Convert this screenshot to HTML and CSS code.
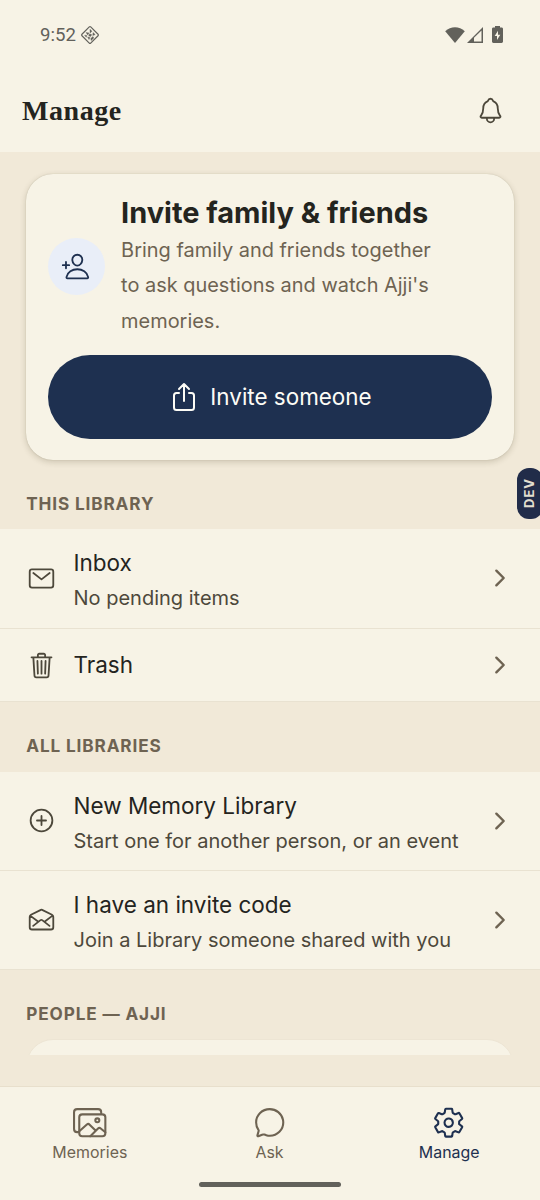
FILE: index.html
```html
<!DOCTYPE html>
<html lang="en">
<head>
<meta charset="utf-8">
<meta name="viewport" content="width=device-width, initial-scale=1">
<title>Manage</title>
<link rel="stylesheet" href="styles.css">
</head>
<body>
<div class="app">
  <div class="status-bar">
    <span class="time">9:52</span>
    <svg class="status-diamond" viewBox="0 0 20 20"><rect x="3.8" y="3.8" width="12.4" height="12.4" rx="1" transform="rotate(45 10 10)" fill="none" stroke="currentColor" stroke-width="1.2"/><path d="M10 4.3l2 2-2 1.6zM6 7.6l3 .3-1.2 2zM13 7.6l2.2 2-2.4 1zM4.6 10.2l2.3.2-.7 1.9zM9.6 8.8l2.2.9-1.3 1.9-1.8-.9zM7.6 11.9l2.4.6-1 2zM12.8 11.5l1 1.5-2.7 2.6-.3-2z" fill="currentColor" stroke="currentColor" stroke-width=".4"/></svg>
    <div class="status-right">
      <svg class="wifi" viewBox="0 0 20 16"><path d="M0.2 4.3C5.8-1 14.2-1 19.8 4.3L10 15.9z" fill="currentColor"/></svg>
      <svg class="signal" viewBox="0 0 16 16"><path d="M0 16L16 0v16z" fill="currentColor"/><path d="M7 14.5V10.8L14.5 3.4v11.1z" class="surface-fill"/></svg>
      <svg class="battery" viewBox="0 0 11 17"><path d="M3 1.5V0h5v1.5h1.6c.8 0 1.4.6 1.4 1.4v12.7c0 .8-.6 1.4-1.4 1.4H1.4C.6 17 0 16.4 0 15.6V2.9c0-.8.6-1.4 1.4-1.4z" fill="currentColor"/><path d="M6 4.7L2.7 10H5v4l3.3-5.3H6z" class="surface-fill"/></svg>
    </div>
  </div>
  <header class="header">
    <h1 class="title">Manage</h1>
    <svg class="icon bell" viewBox="0 0 512 512"><path d="M427.68 351.43C402 320 383.87 304 383.87 217.35 383.87 138 343.35 109.73 310 96c-4.43-1.82-8.6-6-9.95-10.55C294.2 65.54 277.8 48 256 48s-38.21 17.55-44 37.47c-1.35 4.6-5.52 8.71-9.95 10.53-33.39 13.75-73.87 41.92-73.87 121.35C128.13 304 110 320 84.32 351.43 73.68 364.45 83 384 101.61 384h308.88c18.51 0 27.77-19.61 17.19-32.57zM320 384v16a64 64 0 01-128 0v-16"/></svg>
  </header>

  <main class="content">
    <section class="card">
      <div class="card-head">
        <div class="avatar"><svg class="icon" viewBox="0 0 512 512"><path d="M376 144c-3.92 52.87-44 96-88 96s-84.15-43.12-88-96c-4-55 35-96 88-96s92 42 88 96zM288 304c-87 0-175.3 48-191.64 138.6-2 10.92 4.21 21.4 15.65 21.4H464c11.44 0 17.62-10.48 15.65-21.4C463.3 352 375 304 288 304zM88 176v112M144 232H32"/></svg></div>
        <div class="card-text">
          <h2 class="card-title">Invite family &amp; friends</h2>
          <p class="card-body">Bring family and friends together<br>to ask questions and watch Ajji's<br>memories.</p>
        </div>
      </div>
      <button class="button"><svg class="icon share" viewBox="0 0 512 512"><path d="M336 192h40a40 40 0 0140 40v192a40 40 0 01-40 40H136a40 40 0 01-40-40V232a40 40 0 0140-40h40M336 128l-80-80-80 80M256 321V48"/></svg><span>Invite someone</span></button>
    </section>

    <h3 class="section-label">THIS LIBRARY</h3>
    <div class="list">
      <div class="row tall">
        <svg class="icon" viewBox="0 0 512 512"><rect x="48" y="96" width="416" height="320" rx="40"/><path d="M112 160l144 112 144-112"/></svg>
        <div class="row-text"><div class="row-title">Inbox</div><div class="row-sub">No pending items</div></div>
        <svg class="icon chevron" viewBox="0 0 512 512"><path d="M184 112l144 144-144 144"/></svg>
      </div>
      <div class="row single">
        <svg class="icon" viewBox="0 0 512 512"><path d="M112 112l20 320c.95 18.49 14.4 32 32 32h184c17.67 0 30.87-13.51 32-32l20-320M80 112h352M192 112V72a23.93 23.93 0 0124-24h80a23.93 23.93 0 0124 24v40M256 176v224M184 176l8 224M328 176l-8 224"/></svg>
        <div class="row-text"><div class="row-title">Trash</div></div>
        <svg class="icon chevron" viewBox="0 0 512 512"><path d="M184 112l144 144-144 144"/></svg>
      </div>
    </div>

    <h3 class="section-label">ALL LIBRARIES</h3>
    <div class="list">
      <div class="row">
        <svg class="icon" viewBox="0 0 512 512"><circle cx="256" cy="256" r="192"/><path d="M256 176v160M336 256H176"/></svg>
        <div class="row-text"><div class="row-title">New Memory Library</div><div class="row-sub">Start one for another person, or an event</div></div>
        <svg class="icon chevron" viewBox="0 0 512 512"><path d="M184 112l144 144-144 144"/></svg>
      </div>
      <div class="row">
        <svg class="icon" viewBox="0 0 512 512"><path d="M441.6 171.61L266.87 85.37a24.57 24.57 0 00-21.74 0L70.4 171.61A40 40 0 0048 207.39V392c0 22.09 18.14 40 40.52 40h335c22.38 0 40.52-17.91 40.52-40V207.39a40 40 0 00-22.44-35.78zM397.33 368L268.07 267.46a24 24 0 00-29.47 0L109.33 368M309.33 295l136-103M61.33 192l139 105"/></svg>
        <div class="row-text"><div class="row-title">I have an invite code</div><div class="row-sub">Join a Library someone shared with you</div></div>
        <svg class="icon chevron" viewBox="0 0 512 512"><path d="M184 112l144 144-144 144"/></svg>
      </div>
    </div>

    <h3 class="section-label">PEOPLE — AJJI</h3>
    <div class="people-card"></div>
  </main>

  <nav class="tabs">
    <div class="tab">
      <svg class="icon" viewBox="0 0 512 512"><path d="M432 112V96a48.14 48.14 0 00-48-48H64a48.14 48.14 0 00-48 48v256a48.14 48.14 0 0048 48h16"/><rect x="96" y="128" width="400" height="336" rx="46"/><ellipse cx="372.92" cy="219.64" rx="30.77" ry="30.55"/><path d="M342.15 372.17L255 285.78a30.93 30.93 0 00-42.18-1.21L96 387.64M265.23 464l118.59-117.73a31 31 0 0141.46-1.87L496 402.91"/></svg>
      <span>Memories</span>
    </div>
    <div class="tab">
      <svg class="icon" viewBox="0 0 512 512"><path d="M87.49 380c1.19-4.38-1.44-10.47-3.95-14.86a44.86 44.86 0 00-2.54-3.8 199.81 199.81 0 01-33-110C47.65 139.09 140.73 48 255.83 48 356.21 48 440 117.54 459.58 209.85a199 199 0 014.42 41.64c0 112.41-89.49 204.93-204.59 204.93-18.3 0-43-4.6-56.47-8.37s-26.92-8.77-30.39-10.11a31.09 31.09 0 00-11.12-2.07 30.71 30.71 0 00-12.09 2.43l-67.83 24.48a16 16 0 01-4.67 1.22 9.6 9.6 0 01-9.57-9.74 15.85 15.85 0 01.6-3.29z"/></svg>
      <span>Ask</span>
    </div>
    <div class="tab active">
      <svg class="icon" viewBox="0 0 512 512"><path d="M262.29 192.31a64 64 0 1057.4 57.4 64.13 64.13 0 00-57.4-57.4zM416.39 256a154.34 154.34 0 01-1.53 20.79l45.21 35.46a10.81 10.81 0 012.45 13.75l-42.77 74a10.81 10.81 0 01-13.14 4.59l-44.9-18.08a16.11 16.11 0 00-15.17 1.75A164.48 164.48 0 01325 400.8a15.94 15.94 0 00-8.82 12.14l-6.73 47.89a11.08 11.08 0 01-10.68 9.17h-85.54a11.11 11.11 0 01-10.69-8.87l-6.72-47.82a16.07 16.07 0 00-9-12.22 155.3 155.3 0 01-21.46-12.57 16 16 0 00-15.11-1.71l-44.89 18.07a10.81 10.81 0 01-13.14-4.58l-42.77-74a10.8 10.8 0 012.45-13.75l38.21-30a16.05 16.05 0 006-14.08c-.36-4.17-.58-8.33-.58-12.5s.21-8.27.58-12.35a16 16 0 00-6.07-13.94l-38.19-30A10.81 10.81 0 0149.48 186l42.77-74a10.81 10.81 0 0113.14-4.59l44.9 18.08a16.11 16.11 0 0015.17-1.75A164.48 164.48 0 01187 111.2a15.94 15.94 0 008.82-12.14l6.73-47.89A11.08 11.08 0 01213.23 42h85.54a11.11 11.11 0 0110.69 8.87l6.72 47.82a16.07 16.07 0 009 12.22 155.3 155.3 0 0121.46 12.57 16 16 0 0015.11 1.71l44.89-18.07a10.81 10.81 0 0113.14 4.58l42.77 74a10.8 10.8 0 01-2.45 13.75l-38.21 30a16.05 16.05 0 00-6.05 14.08c.33 4.14.55 8.3.55 12.47z"/></svg>
      <span>Manage</span>
    </div>
  </nav>
  <div class="home-bar"></div>
  <div class="dev-badge"><span>DEV</span></div>
</div>
</body>
</html>
```

FILE: styles.css
```css
:root {
  --bg: #f1e9d8;
  --surface: #f7f3e6;
  --line: #e9e2d1;
  --ink: #24241e;
  --soft: #4d483b;
  --muted: #6e6352;
  --navy: #1e3050;
}

* { box-sizing: border-box; margin: 0; }

body { font-family: Inter, "Liberation Sans", sans-serif; color: var(--ink); background: var(--bg); }

.app {
  position: relative;
  width: 540px;
  height: 1200px;
  overflow: hidden;
  display: flex;
  flex-direction: column;
  background: var(--bg);
}

.icon {
  width: 29px;
  height: 29px;
  flex: none;
  display: block;
  fill: none;
  stroke: currentColor;
  stroke-width: 32;
  stroke-linecap: round;
  stroke-linejoin: round;
}

.surface-fill { fill: var(--surface); }

.status-bar {
  height: 69px;
  flex: none;
  display: flex;
  align-items: center;
  padding: 0 37px 0 40px;
  background: var(--surface);
  color: #62615b;
}
.time { font: 18.6px/20px Roboto, sans-serif; }
.status-diamond { width: 20px; height: 20px; margin-left: 4px; }
.status-right { margin-left: auto; display: flex; align-items: center; }
.wifi { width: 20px; height: 16px; }
.signal { width: 16px; height: 16px; margin-left: 2px; }
.battery { width: 11px; height: 17px; margin-left: 9px; }

.header {
  height: 83px;
  flex: none;
  display: flex;
  align-items: center;
  justify-content: space-between;
  padding: 0 35.5px 1px 22px;
  background: var(--surface);
}
.title { font: bold 28px/36px "Liberation Serif", serif; letter-spacing: 0.55px; padding-top: 2px; }
.bell { color: var(--soft); }

.content { height: 903px; flex: none; overflow: hidden; padding-top: 21.5px; }

.card {
  margin: 0 26.3px;
  height: 286px;
  padding: 20.5px 21.3px;
  border-radius: 27px;
  background: var(--surface);
  box-shadow: 0 2px 6px rgba(60, 50, 20, 0.2), 0 0 1px rgba(60, 50, 20, 0.25);
}
.card-head { display: flex; align-items: center; gap: 16.5px; }
.avatar {
  width: 57px;
  height: 57px;
  flex: none;
  display: grid;
  place-items: center;
  border-radius: 50%;
  background: #e9eef8;
  color: var(--navy);
}
.avatar .icon { margin: 0 1px 0 0; }
.card-title { font-size: 28.95px; font-weight: 700; line-height: 38px; white-space: nowrap; }
.card-body { padding-top: 1px; margin-bottom: -1px; font-size: 19.95px; line-height: 35.4px; color: var(--muted); white-space: nowrap; }
.button {
  width: 100%;
  height: 84px;
  margin-top: 16.6px;
  display: flex;
  align-items: center;
  justify-content: center;
  gap: 10px;
  border: 0;
  border-radius: 42px;
  background: var(--navy);
  color: #fdfcf6;
  font: 22.45px/28px Inter, sans-serif;
}
.share { width: 32px; height: 32px; }

.section-label {
  height: 69.5px;
  padding: 31px 26.3px 0;
  font-size: 17.2px;
  font-weight: 700;
  line-height: 26px;
  letter-spacing: 0.85px;
  color: var(--muted);
}

.row {
  height: 99px;
  display: flex;
  align-items: center;
  padding: 0 27px;
  background: var(--surface);
  border-bottom: 1px solid var(--line);
  color: var(--soft);
}
.row.tall { height: 100px; padding-bottom: 1px; }
.row.single { height: 73px; }
.row-text { flex: 1; margin-left: 17.5px; white-space: nowrap; }
.row-title { font-size: 22.5px; line-height: 39.6px; color: var(--ink); }
.row-sub { padding-top: 0.6px; margin-bottom: -0.6px; font-size: 20px; line-height: 30.4px; }
.chevron { width: 26px; height: 26px; stroke-width: 48; color: var(--muted); }

.people-card {
  height: 120px;
  margin: 0 26.3px;
  border: 1px solid #ede5d4;
  border-radius: 27px;
  background: var(--surface);
}

.tabs {
  margin-top: 31px;
  height: 114px;
  flex: none;
  display: flex;
  padding: 18.5px 1px 0 0;
  border-top: 1px solid #e8dfcc;
  background: var(--surface);
}
.tab {
  flex: 1;
  display: flex;
  flex-direction: column;
  align-items: center;
  color: var(--muted);
  font-size: 15.95px;
  line-height: 20px;
}
.tab .icon { width: 33.4px; height: 33.4px; margin-bottom: 4.6px; }
.tab.active { color: var(--navy); }

.home-bar {
  position: absolute;
  left: 199px;
  bottom: 13px;
  width: 142px;
  height: 5px;
  border-radius: 3px;
  background: #62615b;
}

.dev-badge {
  position: absolute;
  left: 517px;
  top: 468px;
  width: 26px;
  height: 51px;
  display: grid;
  place-items: center;
  padding: 0 3px 1px 0;
  border-radius: 12px;
  background: #212c49;
  color: #e2dece;
  font-size: 13px;
  font-weight: 700;
  line-height: 16px;
}
.dev-badge span { writing-mode: vertical-rl; transform: rotate(180deg); letter-spacing: 1px; }
```
